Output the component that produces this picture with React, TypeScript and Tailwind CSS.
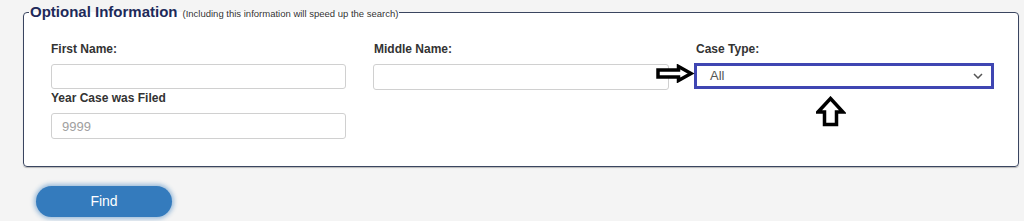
import React from "react";

export default function App() {
  return (
    <div
      className="relative w-[1024px] h-[221px] overflow-hidden bg-[#f4f4f4] text-[#333]"
      style={{ fontFamily: '"Liberation Sans", Arial, sans-serif' }}
    >
      <div className="pl-[23px] pt-[3px]">
        <fieldset className="w-[996px] h-[164px] border border-[#3a4560] rounded-[4px] bg-white pl-[5px] shadow-[0_1px_1px_rgba(0,0,0,0.25)]">
          <legend className="px-[1px] leading-[17px] whitespace-nowrap">
            <span className="text-[15px] font-bold text-[#1e2a5a]">Optional Information</span>
            <span className="text-[9.5px] text-[#333] ml-[5px]">
              (Including this information will speed up the search)
            </span>
          </legend>
          <div className="pl-[22px] pt-[20px] flex gap-[27px]">
            <div className="w-[295px] flex flex-col">
              <label className="text-[12px] font-bold leading-[14px] text-[#333]">First Name:</label>
              <input
                className="mt-[8px] h-[25px] w-full border border-[#d0d0d0] rounded-[3px] bg-white"
                type="text"
              />
              <label className="mt-[2px] text-[12px] font-bold leading-[14px] text-[#333]">
                Year Case was Filed
              </label>
              <input
                className="mt-[8px] h-[26px] w-full border border-[#d0d0d0] rounded-[3px] bg-white px-[10px] text-[13px] placeholder:text-[#a0a0a0]"
                type="text"
                placeholder="9999"
              />
            </div>
            <div className="w-[296px] flex flex-col">
              <label className="pl-[1px] text-[12px] font-bold leading-[14px] text-[#333]">Middle Name:</label>
              <input
                className="mt-[8px] h-[26px] w-full border border-[#d0d0d0] rounded-[3px] bg-white"
                type="text"
              />
            </div>
            <div className="ml-[-2px] w-[300px] flex flex-col">
              <label className="pl-[2px] text-[12px] font-bold leading-[14px] text-[#333]">Case Type:</label>
              <div className="mt-[7px] h-[26px] w-full border-[3px] border-[#3f46b2] bg-white flex items-center justify-between pl-[13px] pr-[8px]">
                <span className="text-[13px] text-[#555]">All</span>
                <svg width="10" height="6" viewBox="0 0 10 6" fill="none">
                  <path d="M1 1l4 4 4-4" stroke="#555" strokeWidth="1.5" />
                </svg>
              </div>
            </div>
          </div>
        </fieldset>
      </div>

      <div className="pl-[36px] pt-[19px]">
        <button className="w-[136px] h-[31px] rounded-full bg-[#347bbd] text-white text-[14px] shadow-[0_0_4px_2px_rgba(52,123,189,0.45)]">
          Find
        </button>
      </div>

      <svg className="absolute left-[655px] top-[64px]" width="40" height="19" viewBox="0 0 40 19">
        <polygon
          points="3,6 23.5,6 23.5,2.5 36,9.5 23.5,16.5 23.5,13 3,13"
          fill="white"
          stroke="black"
          strokeWidth="3.5"
          strokeLinejoin="miter"
        />
      </svg>
      <svg className="absolute left-[816px] top-[96px]" width="30" height="31" viewBox="0 0 30 31">
        <polygon
          points="14.5,2.5 27,16 20.5,16 20.5,28.5 8.5,28.5 8.5,16 2,16"
          fill="white"
          stroke="black"
          strokeWidth="3.5"
          strokeLinejoin="miter"
        />
      </svg>
    </div>
  );
}
